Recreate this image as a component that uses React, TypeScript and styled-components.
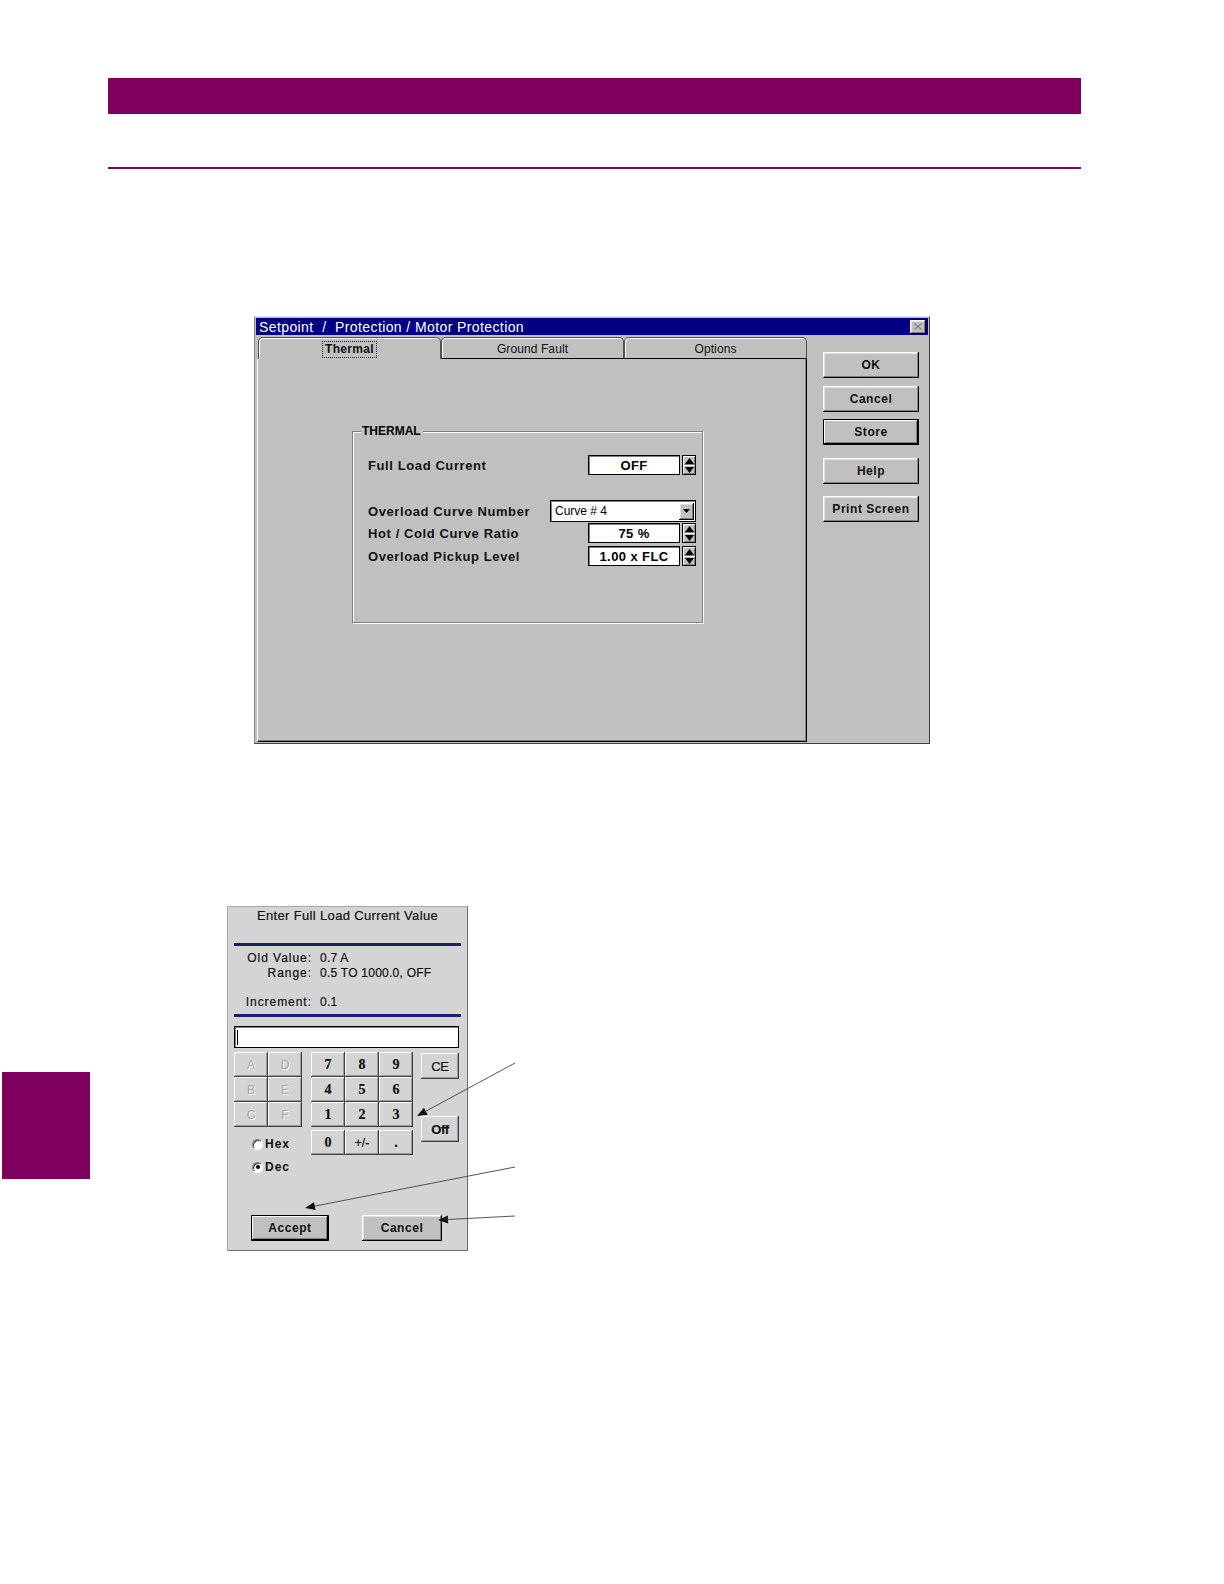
import React from "react";
import styled, { createGlobalStyle, css } from "styled-components";

const GlobalStyle = createGlobalStyle`
  html, body {
    margin: 0;
    padding: 0;
    background: #ffffff;
    overflow: hidden;
  }
  body {
    font-family: "Liberation Sans", Arial, sans-serif;
    color: #000;
  }
  * {
    box-sizing: border-box;
  }
`;

const Page = styled.div`
  height: 1584px;
  padding-top: 78px;
  overflow: hidden;
`;

const Banner = styled.div`
  margin-left: 108px;
  width: 973px;
  height: 36px;
  background: #80005f;
`;

const Rule = styled.div`
  margin: 53px 0 0 108px;
  width: 973px;
  height: 2px;
  background: #7a0a5e;
`;

/* ---------- shared win95 bevel ---------- */

const raised = css`
  background: #c0c0c0;
  border: none;
  box-shadow: inset -1px -1px 0 #000, inset 1px 1px 0 #fff,
    inset -2px -2px 0 #808080, inset 2px 2px 0 #dfdfdf;
`;

const sunken = css`
  background: #fff;
  border: 1px solid #000;
  box-shadow: inset 1px 1px 0 #808080;
`;

/* ---------- setpoint dialog ---------- */

const Dialog = styled.div`
  margin: 147px 0 0 254px;
  width: 676px;
  height: 428px;
  background: #c0c0c0;
  border: 1px solid #404040;
  border-top-color: #dfdfdf;
  border-left-color: #8a8a8a;
  padding: 1px;
  display: flex;
  flex-direction: column;
`;

const TitleBar = styled.div`
  height: 17px;
  background: #000080;
  color: #fff;
  display: flex;
  align-items: center;
  justify-content: space-between;
  padding: 0 2px 0 3px;
  font-size: 14px;
  white-space: pre;
  letter-spacing: 0.4px;
`;

const CloseBox = styled.div`
  ${raised};
  width: 16px;
  height: 14px;
  display: flex;
  align-items: center;
  justify-content: center;
`;

const DialogBody = styled.div`
  display: flex;
  padding: 2px 0 0 1px;
`;

const TabControl = styled.div`
  width: 550px;
  display: flex;
  flex-direction: column;
`;

const TabStrip = styled.div`
  height: 22px;
  display: grid;
  grid-template-columns: 183px 183px 183px;
  padding-left: 1px;
`;

const Tab = styled.div<{ $active?: boolean }>`
  display: flex;
  align-items: center;
  justify-content: center;
  border: 1px solid #505050;
  border-bottom: ${(p) => (p.$active ? "none" : "1px solid #000")};
  border-radius: 5px 5px 0 0;
  box-shadow: inset 1px 1px 0 #fff;
  font-size: 12px;
  font-weight: ${(p) => (p.$active ? "bold" : "normal")};
  letter-spacing: ${(p) => (p.$active ? "0.3px" : "0.1px")};
  color: #111;
  padding-top: 1px;
`;

const FocusText = styled.span`
  outline: 1px dotted #222;
  padding: 0 2px;
  line-height: 15px;
`;

const TabPanel = styled.div`
  height: 383px;
  border-left: 1px solid #fff;
  border-right: 1px solid #000;
  border-bottom: 1px solid #000;
  box-shadow: inset -1px -1px 0 #808080;
  padding: 72px 0 0 94px;
`;

const GroupBox = styled.div`
  width: 351px;
  height: 192px;
  border: 1px solid #808080;
  box-shadow: inset 1px 1px 0 #fff, 1px 1px 0 #fff;
  display: flex;
  flex-direction: column;
  padding: 0 6px 0 15px;
`;

const Legend = styled.div`
  align-self: flex-start;
  margin: -8px 0 0 -7px;
  padding: 0 2px 0 1px;
  background: #c0c0c0;
  font-size: 12px;
  font-weight: bold;
  line-height: 14px;
`;

const FieldRow = styled.div<{ $gap: number }>`
  height: 22px;
  margin-top: ${(p) => p.$gap}px;
  display: flex;
  align-items: center;
  justify-content: space-between;
`;

const FieldLabel = styled.span`
  font-size: 13px;
  font-weight: bold;
  letter-spacing: 0.6px;
  color: #111;
`;

const SpinField = styled.div`
  display: flex;
  align-items: center;
  gap: 2px;
`;

const ValueBox = styled.div`
  ${sunken};
  width: 92px;
  height: 20px;
  display: flex;
  align-items: center;
  justify-content: center;
  font-size: 13px;
  font-weight: bold;
  letter-spacing: 0.4px;
`;

const Spinner = styled.div`
  width: 14px;
  height: 20px;
  border: 1px solid #000;
  display: flex;
  flex-direction: column;
`;

const SpinHalf = styled.div`
  flex: 1;
  background: #c0c0c0;
  box-shadow: inset 1px 1px 0 #fff, inset -1px -1px 0 #808080;
  display: flex;
  align-items: center;
  justify-content: center;
`;

const Combo = styled.div`
  ${sunken};
  width: 146px;
  height: 22px;
  display: flex;
  align-items: center;
  justify-content: space-between;
  padding: 0 1px 0 4px;
  font-size: 12px;
`;

const DropButton = styled.div`
  ${raised};
  width: 15px;
  height: 17px;
  display: flex;
  align-items: center;
  justify-content: center;
`;

const SideColumn = styled.div`
  margin-left: 16px;
  padding-top: 15px;
  display: flex;
  flex-direction: column;
`;

const WinButton = styled.div<{ $gap?: number; $default?: boolean; $w?: number }>`
  ${raised};
  width: ${(p) => p.$w ?? 96}px;
  height: 26px;
  margin-top: ${(p) => p.$gap ?? 0}px;
  display: flex;
  align-items: center;
  justify-content: center;
  font-size: 12px;
  font-weight: bold;
  letter-spacing: 0.55px;
  color: #111;
  ${(p) =>
    p.$default &&
    css`
      border: 1px solid #000;
      box-shadow: inset -1px -1px 0 #000, inset 1px 1px 0 #fff,
        inset -2px -2px 0 #808080;
    `}
`;

/* ---------- keypad ---------- */

const KeypadSection = styled.div`
  margin-top: 162px;
  display: flex;
  align-items: flex-start;
`;

const SideTab = styled.div`
  margin: 166px 0 0 2px;
  width: 88px;
  height: 107px;
  background: #80005f;
`;

const KeypadWrap = styled.div`
  position: relative;
  margin-left: 137px;
`;

const Keypad = styled.div`
  width: 241px;
  height: 345px;
  background: #d4d4d4;
  border: 1px solid #a8a8a8;
  border-right-color: #6e6e6e;
  border-bottom-color: #6e6e6e;
  display: flex;
  flex-direction: column;
  -webkit-text-stroke: 0.2px #111;
`;

const KeypadTitle = styled.div`
  padding-top: 1px;
  line-height: 16px;
  text-align: center;
  font-size: 13px;
  letter-spacing: 0.35px;
  color: #111;
`;

const NavyRule = styled.div<{ $gap: number }>`
  height: 3px;
  margin: ${(p) => p.$gap}px 6px 0 6px;
  background: #1e1e6e;
`;

const InfoGrid = styled.div<{ $gap: number }>`
  margin-top: ${(p) => p.$gap}px;
  display: grid;
  grid-template-columns: 83px auto;
  column-gap: 9px;
  font-size: 12px;
  line-height: 15px;
  color: #111;
  letter-spacing: 0.25px;
`;

const InfoLabel = styled.span`
  text-align: right;
  letter-spacing: 0.95px;
  margin-right: -0.95px;
`;

const EntryBox = styled.div`
  ${sunken};
  margin: 9px 0 0 6px;
  width: 225px;
  height: 22px;
  display: flex;
  align-items: center;
  padding-left: 2px;
`;

const Caret = styled.div`
  width: 1px;
  height: 15px;
  background: #000;
`;

const KeysArea = styled.div`
  margin: 4px 0 0 6px;
  display: flex;
  align-items: flex-start;
`;

const LeftColumn = styled.div`
  width: 68px;
  display: flex;
  flex-direction: column;
`;

const KeyGrid = styled.div<{ $cols: number }>`
  display: grid;
  grid-template-columns: repeat(${(p) => p.$cols}, 34px);
  grid-auto-rows: 25px;
`;

const Key = styled.div<{ $disabled?: boolean; $serif?: boolean }>`
  background: #d4d4d4;
  box-shadow: inset -1px -1px 0 #404040, inset 1px 1px 0 #fff,
    inset -2px -2px 0 #9a9a9a;
  display: flex;
  align-items: center;
  justify-content: center;
  font-size: ${(p) => (p.$serif ? 14 : 12)}px;
  font-family: ${(p) =>
    p.$serif ? `"Liberation Serif", "Times New Roman", serif` : `"Liberation Sans", Arial, sans-serif`};
  font-weight: ${(p) => (p.$serif ? "bold" : "normal")};
  color: ${(p) => (p.$disabled ? "#a4a4a4" : "#111")};
  -webkit-text-stroke: ${(p) => (p.$disabled ? "0" : "0.2px #111")};
  text-shadow: ${(p) => (p.$disabled ? "1px 1px 0 #fff" : "none")};
`;

const NumBlock = styled.div`
  margin-left: 9px;
  display: flex;
  flex-direction: column;
  gap: 3px;
`;

const RightKeys = styled.div`
  margin-left: 8px;
  display: flex;
  flex-direction: column;
`;

const SideKey = styled.div<{ $gap: number; $bold?: boolean }>`
  margin-top: ${(p) => p.$gap}px;
  width: 38px;
  height: 26px;
  background: #d4d4d4;
  box-shadow: inset -1px -1px 0 #404040, inset 1px 1px 0 #fff,
    inset -2px -2px 0 #9a9a9a;
  display: flex;
  align-items: center;
  justify-content: center;
  font-size: 13px;
  font-weight: ${(p) => (p.$bold ? "bold" : "normal")};
  letter-spacing: -0.4px;
  color: #111;
`;

const RadioRow = styled.div<{ $gap: number }>`
  margin: ${(p) => p.$gap}px 0 0 18px;
  height: 16px;
  display: flex;
  align-items: center;
  gap: 2px;
  font-size: 12px;
  font-weight: bold;
  letter-spacing: 1px;
  color: #111;
  -webkit-text-stroke: 0;
`;

const RadioDot = styled.span<{ $checked?: boolean }>`
  width: 11px;
  height: 11px;
  border-radius: 50%;
  background: #fff;
  border: 1px solid #808080;
  border-right-color: #fff;
  border-bottom-color: #fff;
  box-shadow: inset 1px 1px 0 #404040;
  display: flex;
  align-items: center;
  justify-content: center;
  &::after {
    content: "";
    width: 4px;
    height: 4px;
    border-radius: 50%;
    background: ${(p) => (p.$checked ? "#000" : "transparent")};
  }
`;

const ActionRow = styled.div`
  margin: 40px 0 0 23px;
  display: flex;
  gap: 33px;
  -webkit-text-stroke: 0;
`;

const Callouts = styled.svg`
  position: absolute;
  left: 0;
  top: 0;
  overflow: visible;
  pointer-events: none;
`;

type Pt = [number, number];

function Arrow({ from, to }: { from: Pt; to: Pt }) {
  const dx = to[0] - from[0];
  const dy = to[1] - from[1];
  const len = Math.hypot(dx, dy);
  const ux = dx / len;
  const uy = dy / len;
  const bx = to[0] - ux * 10;
  const by = to[1] - uy * 10;
  const px = -uy * 4;
  const py = ux * 4;
  return (
    <g>
      <line x1={from[0]} y1={from[1]} x2={bx} y2={by} stroke="#444" strokeWidth={0.9} />
      <polygon
        points={`${to[0]},${to[1]} ${bx + px},${by + py} ${bx - px},${by - py}`}
        fill="#111"
      />
    </g>
  );
}

function UpDown() {
  return (
    <Spinner>
      <SpinHalf>
        <svg width="9" height="6" viewBox="0 0 9 6">
          <polygon points="4.5,0 9,6 0,6" fill="#000" />
        </svg>
      </SpinHalf>
      <SpinHalf>
        <svg width="9" height="6" viewBox="0 0 9 6">
          <polygon points="0,0 9,0 4.5,6" fill="#000" />
        </svg>
      </SpinHalf>
    </Spinner>
  );
}

const fields = [
  { label: "Hot / Cold Curve Ratio", value: "75 %", gap: 0 },
  { label: "Overload Pickup Level", value: "1.00 x FLC", gap: 1 },
];

const numRows = [
  ["7", "8", "9"],
  ["4", "5", "6"],
  ["1", "2", "3"],
];

export default function App() {
  return (
    <Page>
      <GlobalStyle />
      <Banner />
      <Rule />

      <Dialog>
        <TitleBar>
          <span>Setpoint  /  Protection / Motor Protection</span>
          <CloseBox>
            <svg width="8" height="7" viewBox="0 0 8 7">
              <path d="M0.5 0.5 L7.5 6.5 M7.5 0.5 L0.5 6.5" stroke="#8a8a8a" strokeWidth="1.4" />
            </svg>
          </CloseBox>
        </TitleBar>

        <DialogBody>
          <TabControl>
            <TabStrip>
              <Tab $active>
                <FocusText>Thermal</FocusText>
              </Tab>
              <Tab>Ground Fault</Tab>
              <Tab>Options</Tab>
            </TabStrip>
            <TabPanel>
              <GroupBox>
                <Legend>THERMAL</Legend>
                <FieldRow $gap={16}>
                  <FieldLabel>Full Load Current</FieldLabel>
                  <SpinField>
                    <ValueBox>OFF</ValueBox>
                    <UpDown />
                  </SpinField>
                </FieldRow>
                <FieldRow $gap={24}>
                  <FieldLabel>Overload Curve Number</FieldLabel>
                  <Combo>
                    <span>Curve # 4</span>
                    <DropButton>
                      <svg width="7" height="4" viewBox="0 0 7 4">
                        <polygon points="0,0 7,0 3.5,4" fill="#000" />
                      </svg>
                    </DropButton>
                  </Combo>
                </FieldRow>
                {fields.map((f) => (
                  <FieldRow key={f.label} $gap={f.gap}>
                    <FieldLabel>{f.label}</FieldLabel>
                    <SpinField>
                      <ValueBox>{f.value}</ValueBox>
                      <UpDown />
                    </SpinField>
                  </FieldRow>
                ))}
              </GroupBox>
            </TabPanel>
          </TabControl>

          <SideColumn>
            <WinButton>OK</WinButton>
            <WinButton $gap={8}>Cancel</WinButton>
            <WinButton $gap={7} $default>
              Store
            </WinButton>
            <WinButton $gap={13}>Help</WinButton>
            <WinButton $gap={12}>Print Screen</WinButton>
          </SideColumn>
        </DialogBody>
      </Dialog>

      <KeypadSection>
        <SideTab />
        <KeypadWrap>
          <Keypad>
            <KeypadTitle>Enter Full Load Current Value</KeypadTitle>
            <NavyRule $gap={19} />
            <InfoGrid $gap={5}>
              <InfoLabel>Old Value:</InfoLabel>
              <span>0.7 A</span>
              <InfoLabel>Range:</InfoLabel>
              <span>0.5 TO 1000.0, OFF</span>
            </InfoGrid>
            <InfoGrid $gap={14}>
              <InfoLabel>Increment:</InfoLabel>
              <span>0.1</span>
            </InfoGrid>
            <NavyRule $gap={4} />
            <EntryBox>
              <Caret />
            </EntryBox>

            <KeysArea>
              <LeftColumn>
                <KeyGrid $cols={2}>
                  {["A", "D", "B", "E", "C", "F"].map((k) => (
                    <Key key={k} $disabled>
                      {k}
                    </Key>
                  ))}
                </KeyGrid>
                <RadioRow $gap={9}>
                  <RadioDot />
                  Hex
                </RadioRow>
                <RadioRow $gap={7}>
                  <RadioDot $checked />
                  Dec
                </RadioRow>
              </LeftColumn>

              <NumBlock>
                <KeyGrid $cols={3}>
                  {numRows.flat().map((k) => (
                    <Key key={k} $serif>
                      {k}
                    </Key>
                  ))}
                </KeyGrid>
                <KeyGrid $cols={3}>
                  <Key $serif>0</Key>
                  <Key>+/-</Key>
                  <Key $serif>.</Key>
                </KeyGrid>
              </NumBlock>

              <RightKeys>
                <SideKey $gap={1}>CE</SideKey>
                <SideKey $gap={37} $bold>
                  Off
                </SideKey>
              </RightKeys>
            </KeysArea>

            <ActionRow>
              <WinButton $w={78} $default>
                Accept
              </WinButton>
              <WinButton $w={80}>Cancel</WinButton>
            </ActionRow>
          </Keypad>

          <Callouts width="300" height="345">
            <Arrow from={[288, 157]} to={[190, 210]} />
            <Arrow from={[288, 261]} to={[78, 302]} />
            <Arrow from={[288, 310]} to={[211, 314]} />
          </Callouts>
        </KeypadWrap>
      </KeypadSection>
    </Page>
  );
}
